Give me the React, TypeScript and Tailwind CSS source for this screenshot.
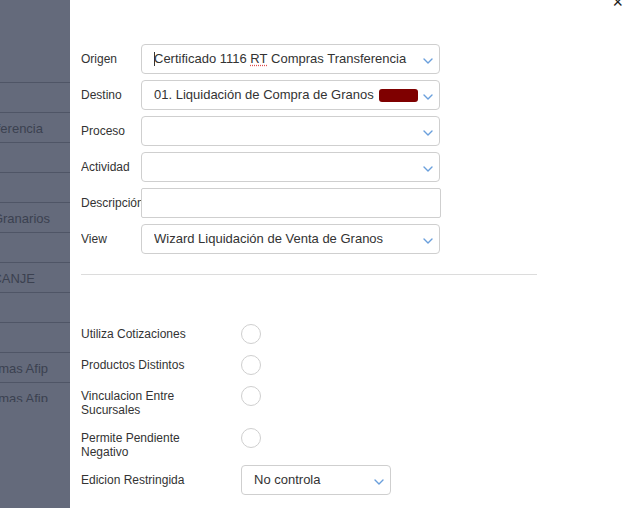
import React from 'react';

const Chevron: React.FC = () => (
  <svg width="10" height="6" viewBox="0 0 10 6" className="shrink-0 mt-[3px] ml-[1px]">
    <path d="M1 1l4 4 4-4" fill="none" stroke="#6a9fdc" strokeWidth="1.4" strokeLinecap="round" strokeLinejoin="round" />
  </svg>
);

const Select: React.FC<{ children?: React.ReactNode; className?: string }> = ({ children, className = 'w-[299px]' }) => (
  <div className={`flex items-center h-[30px] border border-[#cfcfcf] rounded-[4px] pl-3 pr-[6px] bg-white ${className}`}>
    <div className="flex-1 flex items-center text-[13px] text-[#333] whitespace-nowrap overflow-hidden">{children}</div>
    <Chevron />
  </div>
);

const Row: React.FC<{ label: string; children: React.ReactNode }> = ({ label, children }) => (
  <div className="flex items-center">
    <div className="w-[60px] text-[12px] text-[#333] whitespace-nowrap overflow-hidden">{label}</div>
    {children}
  </div>
);

const Toggle: React.FC = () => (
  <div className="w-5 h-5 rounded-full border border-[#cfcfcf] bg-white shrink-0" />
);

// menu of the page underneath the dimmed overlay; texts are cut at the panel edge
const menu: { text: string; pr: string }[] = [
  { text: '', pr: '' },
  { text: '', pr: '' },
  { text: 'Compras Transferencia', pr: 'pr-[27px]' },
  { text: '', pr: '' },
  { text: '', pr: '' },
  { text: 'Canje Granarios', pr: 'pr-[20px]' },
  { text: '', pr: '' },
  { text: 'CANJE', pr: 'pr-[35px]' },
  { text: '', pr: '' },
  { text: '', pr: '' },
  { text: 'Formas Afip', pr: 'pr-[22px]' },
  { text: 'Normas Afip', pr: 'pr-[22px]' },
];

export default function App() {
  return (
    <div className="flex w-[637px] h-[508px] overflow-hidden bg-white" style={{ fontFamily: '"Liberation Sans", Arial, sans-serif' }}>
      <div className="w-[70px] shrink-0 bg-[#646a7b] pt-[53px]">
        <div className="h-[349px] overflow-hidden">
          {menu.map((m, i) => (
            <div key={i} className={`h-[30px] pt-[3px] border-b border-[#4f5566] flex items-center justify-end text-[13px] text-[#3b4150] whitespace-nowrap overflow-hidden ${m.pr}`}>
              {m.text}
            </div>
          ))}
        </div>
      </div>

      <div className="relative flex-1 pl-[11px] pt-[44px]">
        <div className="absolute right-[14px] -top-[7px] text-[18px] leading-none text-[#222]">×</div>

        <div className="flex flex-col gap-[6px]">
          <Row label="Origen">
            <Select>
              <span className="w-px h-[14px] bg-[#333] -mr-px" />
              <span>Certificado 1116&nbsp;</span>
              <span className="underline decoration-dotted decoration-[#e05050] underline-offset-2">RT</span>
              <span>&nbsp;Compras Transferencia</span>
            </Select>
          </Row>
          <Row label="Destino">
            <Select>
              <span>01. Liquidación de Compra de Granos</span>
              <span className="ml-[5px] w-[39px] h-[13px] rounded-[3px] bg-[#7f0000]" />
            </Select>
          </Row>
          <Row label="Proceso">
            <Select />
          </Row>
          <Row label="Actividad">
            <Select />
          </Row>
          <Row label="Descripción">
            <div className="w-[300px] h-[30px] border border-[#cfcfcf] rounded-[2px]" />
          </Row>
          <Row label="View">
            <Select>Wizard Liquidación de Venta de Granos</Select>
          </Row>
        </div>

        <div className="w-[456px] h-px bg-[#dcdcdc] mt-5" />

        <div className="flex flex-col mt-[49px] text-[12px] text-[#333] leading-[14px]">
          <div className="flex items-start">
            <div className="w-[160px] pt-[3px]">Utiliza Cotizaciones</div>
            <Toggle />
          </div>
          <div className="flex items-start mt-[11px]">
            <div className="w-[160px] pt-[3px]">Productos Distintos</div>
            <Toggle />
          </div>
          <div className="flex items-start mt-[11px]">
            <div className="w-[160px] pt-[3px]">Vinculacion Entre<br />Sucursales</div>
            <Toggle />
          </div>
          <div className="flex items-start mt-[11px]">
            <div className="w-[160px] pt-[3px]">Permite Pendiente<br />Negativo</div>
            <Toggle />
          </div>
          <div className="flex items-center mt-[6px]">
            <div className="w-[160px]">Edicion Restringida</div>
            <Select className="w-[150px]">No controla</Select>
          </div>
        </div>
      </div>
    </div>
  );
}
